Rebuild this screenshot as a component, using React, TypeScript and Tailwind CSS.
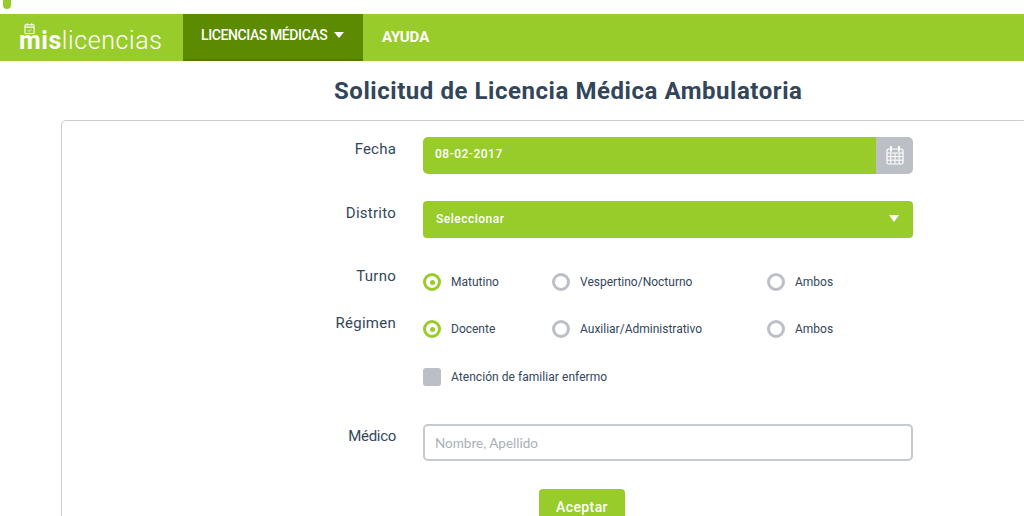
import { ReactNode } from 'react';

const font = { fontFamily: 'Roboto, "Liberation Sans", sans-serif' };

function LogoCalendar() {
  return (
    <svg width="11" height="11" viewBox="0 0 12 12" fill="none" stroke="white" strokeWidth="1.1">
      <rect x="1" y="2" width="10" height="9.5" rx="1" />
      <path d="M1 4.5h10M3.5 0.4v2.4M8.5 0.4v2.4" />
      <path d="M4 7.8l1.5 1.5 2.6-2.6" strokeWidth="0.9" />
    </svg>
  );
}

function CalendarIcon() {
  return (
    <svg width="18" height="19" viewBox="0 0 18 19" fill="none" stroke="white" strokeWidth="1">
      <rect x="1" y="3" width="16" height="15" rx="1.5" fill="#bcc0c6" strokeWidth="1.2" />
      <path d="M1 7h16M1 10.6h16M1 14.2h16M4.8 7v11M9 7v11M13.2 7v11" />
      <path d="M5 0.8v4M13 0.8v4" strokeWidth="2" strokeLinecap="round" />
    </svg>
  );
}

function Row({ label, labelClass, className, children }: { label: string; labelClass: string; className: string; children: ReactNode }) {
  return (
    <div className={`grid grid-cols-[334px_490px] gap-x-[27px] ${className}`}>
      <span className={`text-right text-[15px] leading-5 text-[#33475b] ${labelClass}`}>{label}</span>
      {children}
    </div>
  );
}

function Radio({ text, checked, width }: { text: string; checked?: boolean; width: string }) {
  return (
    <label className={`flex items-center gap-[10px] ${width}`}>
      {checked ? (
        <span className="flex h-[18px] w-[18px] items-center justify-center rounded-full border-[3.5px] border-[#98cc2b]">
          <span className="h-[5px] w-[5px] rounded-full bg-[#98cc2b]" />
        </span>
      ) : (
        <span className="h-[18px] w-[18px] rounded-full border-[3.5px] border-[#bcc0c6]" />
      )}
      <span className="text-[12px] leading-4 tracking-[0px] text-[#33475b]">{text}</span>
    </label>
  );
}

export default function App() {
  return (
    <div className="h-[516px] w-[1024px] overflow-hidden bg-white" style={font}>
      <div className="h-[14px]">
        <div className="ml-[3px] h-[9px] w-[8px] rounded-b-[4px] bg-[#98cc2b]" />
      </div>

      <header className="flex h-[47px] items-stretch bg-[#98cc2b] text-white">
        <div className="relative flex w-[183px] items-end pb-[5px] pl-[19px]">
          <span className="text-[25px] leading-[31px] tracking-[0.58px]">
            <span className="font-bold">mis</span>
            <span className="font-light">licencias</span>
          </span>
          <span className="absolute left-[24px] top-[9px]">
            <LogoCalendar />
          </span>
        </div>
        <div className="flex w-[180px] items-center gap-2 border-b-2 border-[#527c00] bg-[#5c8a00] pb-[3px] pl-[18px] text-[14px] font-medium tracking-[-0.4px]">
          LICENCIAS MÉDICAS
          <span className="ml-[-1px] h-0 w-0 border-x-[5.5px] border-t-[6px] border-x-transparent border-t-white" />
        </div>
        <div className="flex items-center pl-[19px] text-[15px] font-bold">AYUDA</div>
      </header>

      <h1 className="mt-[15px] h-[31px] pl-[334px] text-[24px] font-bold leading-[31px] tracking-[0.55px] text-[#324559]">
        Solicitud de Licencia Médica Ambulatoria
      </h1>

      <main className="ml-[61px] mr-[-4px] mt-[13px] h-[420px] rounded-[5px] border border-[#c9cdd1] pt-4">
        <Row label="Fecha" labelClass="mt-[2px] tracking-[0.2px]" className="h-[37px]">
          <div className="flex overflow-hidden rounded-[5px]">
            <div className="flex flex-1 items-center bg-[#98cc2b] pb-1 pl-3 text-[12px] font-medium tracking-[0.5px] text-white">
              08-02-2017
            </div>
            <div className="flex w-[37px] items-center justify-center bg-[#bcc0c6]">
              <CalendarIcon />
            </div>
          </div>
        </Row>

        <Row label="Distrito" labelClass="mt-[2px] tracking-[0.25px]" className="mt-[27px] h-[37px]">
          <div className="flex items-center justify-between rounded-[4px] bg-[#98cc2b] pb-[2px] pl-[13px] pr-[14px] text-[12px] font-medium tracking-[0.5px] text-white">
            Seleccionar
            <span className="h-0 w-0 border-x-[5.5px] border-t-[7px] border-x-transparent border-t-white" />
          </div>
        </Row>

        <Row label="Turno" labelClass="mt-[-6px] tracking-[0.25px]" className="mt-[34px] h-[20px]">
          <div className="flex h-[20px] items-center">
            <Radio text="Matutino" checked width="w-[129px]" />
            <Radio text="Vespertino/Nocturno" width="w-[215px]" />
            <Radio text="Ambos" width="w-[100px]" />
          </div>
        </Row>

        <Row label="Régimen" labelClass="mt-[-6px] tracking-[0.25px]" className="mt-[27px] h-[20px]">
          <div className="flex h-[20px] items-center">
            <Radio text="Docente" checked width="w-[129px]" />
            <Radio text="Auxiliar/Administrativo" width="w-[215px]" />
            <Radio text="Ambos" width="w-[100px]" />
          </div>
        </Row>

        <div className="ml-[361px] mt-[28px] flex h-[20px] items-center gap-[10px]">
          <span className="h-[18px] w-[18px] rounded-[3px] bg-[#bcc0c6]" />
          <span className="text-[12px] leading-4 tracking-[0.05px] text-[#33475b]">Atención de familiar enfermo</span>
        </div>

        <Row label="Médico" labelClass="mt-[2px] tracking-[-0.3px]" className="mt-[37px] h-[37px]">
          <input
            placeholder="Nombre, Apellido"
            className="rounded-[5px] border-2 border-[#c6cacf] pl-[10px] pt-[1px] text-[13.5px] text-[#33475b] outline-none placeholder:text-[#a9b0b8]"
            style={{ fontFamily: 'Lato, sans-serif' }}
          />
        </Row>

        <div className="ml-[477px] mt-[28px]">
          <button className="h-[36px] w-[86px] rounded-[4px] bg-[#98cc2b] text-[14px] font-medium tracking-[0.4px] text-white">
            Aceptar
          </button>
        </div>
      </main>
    </div>
  );
}
